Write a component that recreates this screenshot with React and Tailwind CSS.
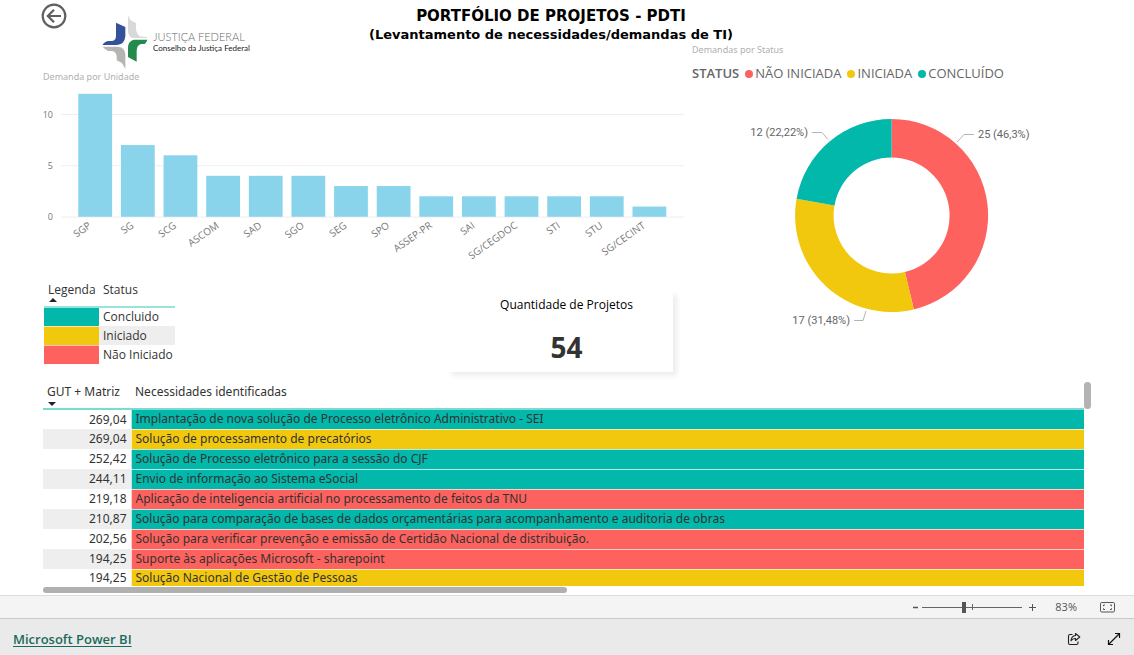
import React from "react";

const TEAL = "#01b8aa";
const YELLOW = "#f2c80f";
const RED = "#fd625e";

const units = [
  ["SGP", 12],
  ["SG", 7],
  ["SCG", 6],
  ["ASCOM", 4],
  ["SAD", 4],
  ["SGO", 4],
  ["SEG", 3],
  ["SPO", 3],
  ["ASSEP-PR", 2],
  ["SAI", 2],
  ["SG/CEGDOC", 2],
  ["STI", 2],
  ["STU", 2],
  ["SG/CECINT", 1],
];

const statusLegend = [
  ["NÃO INICIADA", "bg-[#fd625e]"],
  ["INICIADA", "bg-[#f2c80f]"],
  ["CONCLUÍDO", "bg-[#01b8aa]"],
];

const legendRows = [
  ["Concluido", "bg-[#01b8aa]"],
  ["Iniciado", "bg-[#f2c80f]"],
  ["Não Iniciado", "bg-[#fd625e]"],
];

const needs = [
  ["269,04", "Implantação de nova solução de Processo eletrônico Administrativo - SEI", "bg-[#01b8aa]"],
  ["269,04", "Solução de processamento de precatórios", "bg-[#f2c80f]"],
  ["252,42", "Solução de Processo eletrônico para a sessão do CJF", "bg-[#01b8aa]"],
  ["244,11", "Envio de informação ao Sistema eSocial", "bg-[#01b8aa]"],
  ["219,18", "Aplicação de inteligencia artificial no processamento de feitos da TNU", "bg-[#fd625e]"],
  ["210,87", "Solução para comparação de bases de dados orçamentárias para acompanhamento e auditoria de obras", "bg-[#01b8aa]"],
  ["202,56", "Solução para verificar prevenção e emissão de Certidão Nacional de distribuição.", "bg-[#fd625e]"],
  ["194,25", "Suporte às aplicações Microsoft - sharepoint", "bg-[#fd625e]"],
  ["194,25", "Solução Nacional de Gestão de Pessoas", "bg-[#f2c80f]"],
];

function Logo() {
  return (
    <div className="flex items-center">
      <svg className="h-[54px] w-[46px]" viewBox="16 14 138 162" aria-hidden="true">
        <path d="M94 14 Q98 24 102 30 L118 38 V55 Q120 78 138 79 H148 L152 83 H106 Q94 76 94 62 Z" fill="#d9d9d9" />
        <path d="M58 37 L86 50 V78 Q84 103 60 104 H18 Q20 97 34 92 H46 Q58 90 58 76 Z" fill="#34519b" />
        <path d="M18 109 H64 Q86 112 86 132 V176 L76 158 L60 150 V138 Q58 123 46 122 H34 Q26 118 18 109 Z" fill="#b5b5b3" />
        <path d="M152 88 H112 Q94 92 94 112 V140 L120 154 V122 Q120 104 134 101 H144 Q150 96 152 88 Z" fill="#23894c" />
      </svg>
      <div className="ml-[5px] flex flex-col font-[Lato,sans-serif]">
        <span className="text-[11px] leading-[12px] font-light text-[#666]">JUSTIÇA FEDERAL</span>
        <span className="text-[8px] leading-[10px] font-normal text-[#222]">Conselho da Justiça Federal</span>
      </div>
    </div>
  );
}

function BarChart() {
  return (
    <svg className="block h-auto w-full" viewBox="0 84 692 186" role="img" aria-label="Demanda por Unidade">
      {[0, 5, 10].map((v) => (
        <g key={v}>
          <line x1="61" x2="684" y1={217 - v * 10.25} y2={217 - v * 10.25} stroke="#eeeeee" />
          <text x="53" y={220 - v * 10.25} textAnchor="end" fontSize="9" fill="#777">
            {v}
          </text>
        </g>
      ))}
      {units.map(([name, value], i) => {
        const x = 78.3 + i * 42.63;
        return (
          <g key={name}>
            <rect x={x} y={216.8 - value * 10.25} width="33.8" height={value * 10.25} fill="#8ad4eb" />
            <text
              transform={`translate(${x + 13.5} 227) rotate(-35)`}
              textAnchor="end"
              fontSize="10"
              fill="#777"
            >
              {name}
            </text>
          </g>
        );
      })}
    </svg>
  );
}

const CX = 891.6;
const CY = 215.5;

function slice(from, to) {
  const pt = (r, t) => {
    const a = t * 2 * Math.PI;
    return `${CX + r * Math.sin(a)} ${CY - r * Math.cos(a)}`;
  };
  const large = to - from > 0.5 ? 1 : 0;
  return `M${pt(96.5, from)} A96.5 96.5 0 ${large} 1 ${pt(96.5, to)} L${pt(58, to)} A58 58 0 ${large} 0 ${pt(58, from)} Z`;
}

function Donut() {
  return (
    <svg className="block h-auto w-full" viewBox="692 84 442 250" role="img" aria-label="Demandas por Status">
      <path d={slice(0, 25 / 54)} fill={RED} />
      <path d={slice(25 / 54, 42 / 54)} fill={YELLOW} />
      <path d={slice(42 / 54, 1)} fill={TEAL} />
      <g fill="none" stroke="#b3b3b3">
        <path d="M957 142 L964 134.500 H974" />
        <path d="M812 132.500 H822 L828 139.500" />
        <path d="M854 320.500 H863 L866 311" />
      </g>
      <g fontSize="11" fill="#666" fontFamily="Roboto, sans-serif">
        <text x="978" y="138">25 (46,3%)</text>
        <text x="808" y="136" textAnchor="end">12 (22,22%)</text>
        <text x="850" y="324" textAnchor="end">17 (31,48%)</text>
      </g>
    </svg>
  );
}

function LegendTable() {
  return (
    <table className="w-[131px] table-fixed border-collapse text-[12px] text-[#333]">
      <thead>
        <tr className="h-[24px] border-b-2 border-[#99e3dd] text-left align-top">
          <th className="w-[55px] p-0 pl-1 font-normal">
            <span className="block leading-[14px] whitespace-nowrap">Legenda</span>
            <svg className="block h-[5px] w-[10px]" viewBox="0 0 10 5" aria-hidden="true">
              <path d="M1 5 L5 1 L9 5 Z" fill="#222" />
            </svg>
          </th>
          <th className="p-0 pl-1 leading-[14px] font-normal">Status</th>
        </tr>
      </thead>
      <tbody>
        {legendRows.map(([name, color]) => (
          <tr key={name} className="h-[19px] even:bg-[#eeeeee]">
            <td className={`border-b border-white/60 p-0 ${color}`} />
            <td className="p-0 pl-1 leading-[18px] whitespace-nowrap">{name}</td>
          </tr>
        ))}
      </tbody>
    </table>
  );
}

function NeedsTable() {
  return (
    <section className="mr-[43px] ml-[43px]">
      <div className="flex">
        <table className="min-w-0 flex-1 table-fixed border-collapse font-['Noto_Sans',sans-serif] text-[12px] leading-[16px] text-[#333]">
          <thead>
            <tr className="h-[27px] border-b-2 border-[#7bdbd3] text-left align-top">
              <th className="w-[88px] p-0 pl-1 font-normal">
                <span className="block leading-[20px] whitespace-nowrap">GUT + Matriz</span>
                <svg className="block h-[5px] w-[10px]" viewBox="0 0 10 5" aria-hidden="true">
                  <path d="M1 0 L5 4 L9 0 Z" fill="#222" />
                </svg>
              </th>
              <th className="p-0 pl-1 leading-[20px] font-normal">Necessidades identificadas</th>
            </tr>
          </thead>
          <tbody>
            {needs.map(([score, text, color]) => (
              <tr key={text} className="h-[20px] last:h-[16px] even:bg-[#eeeeee]">
                <td className="p-0 pr-1 text-right">{score}</td>
                <td className={`border-b border-l border-white/70 p-0 pl-1 whitespace-nowrap ${color}`}>{text}</td>
              </tr>
            ))}
          </tbody>
        </table>
        <div className="h-[27px] w-[7px] rounded-full bg-[#b3b3b1]" />
      </div>
      <div className="h-[6px] w-1/2 rounded-full bg-[#b0b0ae]" />
    </section>
  );
}

export default function App() {
  return (
    <div className="flex min-h-screen flex-col bg-white font-['Open_Sans','Noto_Sans',sans-serif]">
      <main className="flex-1 pb-[2px]">
        <div className="grid grid-cols-[692fr_442fr]">
          <h1 className="col-span-2 col-start-1 row-start-1 pt-[6px] pr-8 text-center font-['DejaVu_Sans',sans-serif] font-bold text-black">
            <span className="block text-[15px] leading-[20px]">PORTFÓLIO DE PROJETOS - PDTI</span>
            <span className="block text-[13px] leading-[18px]">(Levantamento de necessidades/demandas de TI)</span>
          </h1>

          <div className="col-start-1 row-start-1">
            <div className="flex h-[70px] items-start pl-[41px]">
              <button type="button" aria-label="Voltar" className="relative mt-[3px]">
                <svg className="h-[26px] w-[26px]" viewBox="0 0 26 26" fill="none" stroke="#5f5f5f" strokeWidth="2.2">
                  <circle cx="13" cy="13" r="11.300" />
                  <path d="M20 13 H7 M13 6.800 L6.800 13 L13 19.200" />
                </svg>
              </button>
              <div className="mt-[15px] ml-[35px]">
                <Logo />
              </div>
            </div>
            <h2 className="pl-[43px] font-['Noto_Sans',sans-serif] text-[9px] leading-[14px] text-[#b0b0b0]">Demanda por Unidade</h2>
            <BarChart />
            <div className="flex items-start justify-between pt-[13px] pr-[19px] pl-[44px]">
              <LegendTable />
              <div className="mt-2 flex h-[81px] w-[225px] flex-col items-center shadow-[4px_4px_5px_#eeeeee]">
                <span className="mt-1 pl-3 text-[12px] leading-[20px] text-black">Quantidade de Projetos</span>
                <strong className="mt-[14px] pl-3 text-[28px] leading-[36px] font-bold text-[#333]">54</strong>
              </div>
            </div>
          </div>

          <div className="col-start-2 row-start-1 pt-[43px]">
            <h2 className="font-['Noto_Sans',sans-serif] text-[9px] leading-[14px] text-[#b0b0b0]">Demandas por Status</h2>
            <div className="flex h-[27px] items-center gap-[6px] pt-[6px] text-[13px] text-[#666]">
              <span className="font-semibold">STATUS</span>
              {statusLegend.map(([name, color]) => (
                <span key={name} className="flex items-center gap-[2px] whitespace-nowrap">
                  <i className={`size-2 rounded-full ${color}`} />
                  {name}
                </span>
              ))}
            </div>
            <Donut />
          </div>
        </div>
        <div className="pt-[10px]">
          <NeedsTable />
        </div>
      </main>

      <div className="flex h-[23px] items-center justify-end border-t border-[#dcdcdc] bg-[#f4f4f4] pr-[19px] text-[#555]">
        <button type="button" aria-label="Reduzir" className="flex h-4 w-[14px] items-center justify-center">
          <svg className="size-[9px]" viewBox="0 0 9 9" aria-hidden="true">
            <path d="M2 4.500 H7" stroke="#555" strokeWidth="1.500" />
          </svg>
        </button>
        <div className="relative flex h-4 w-[100px] items-center">
          <span className="absolute top-[5px] left-[50px] h-[6px] w-px bg-[#666]" />
          <input
            type="range"
            min="0"
            max="100"
            defaultValue="41"
            aria-label="Zoom"
            className="relative h-3 w-full appearance-none bg-transparent [&::-webkit-slider-runnable-track]:h-px [&::-webkit-slider-runnable-track]:bg-[#666] [&::-webkit-slider-thumb]:-mt-[5px] [&::-webkit-slider-thumb]:h-[11px] [&::-webkit-slider-thumb]:w-1 [&::-webkit-slider-thumb]:appearance-none [&::-webkit-slider-thumb]:bg-[#555]"
          />
        </div>
        <button type="button" aria-label="Ampliar" className="ml-[5px] flex size-[10px] items-center justify-center">
          <svg className="size-[9px]" viewBox="0 0 9 9" aria-hidden="true">
            <path d="M1 4.500 H8 M4.500 1 V8" stroke="#555" />
          </svg>
        </button>
        <span className="ml-[18px] text-[11px] leading-[16px]">83%</span>
        <button type="button" aria-label="Ajustar à página" className="ml-[23px]">
          <svg className="block h-[11px] w-[15px]" viewBox="0 0 15 11" fill="none" stroke="#555" aria-hidden="true">
            <rect x=".5" y=".5" width="14" height="9.500" rx="1.200" />
            <path d="M3.500 4.200 V3 H5 M10 3 H11.500 V4.200 M11.500 6.300 V7.500 H10 M5 7.500 H3.500 V6.300" />
          </svg>
        </button>
      </div>

      <footer className="flex h-[37px] items-center border-t border-[#c8c8c8] bg-[#eaeaea] pt-[3px] pr-[13px] pl-[13px]">
        <a href="#powerbi" className="text-[13px] leading-[18px] font-semibold text-[#1a6b5d] underline underline-offset-2">
          Microsoft Power BI
        </a>
        <button type="button" aria-label="Compartilhar" className="ml-auto">
          <svg className="block size-[14px]" viewBox="0 0 14 14" fill="none" stroke="#222" strokeWidth="1.100" aria-hidden="true">
            <path d="M5.500 2.500 H3 Q1.500 2.500 1.500 4 V11 Q1.500 12.500 3 12.500 H9.500 Q11 12.500 11 11 V9.500" />
            <path d="M8.500 1.500 L12.800 5 L8.500 8.500 V6.500 Q5.500 6.300 4 8.800 Q4.300 4 8.500 3.500 Z" strokeLinejoin="round" />
          </svg>
        </button>
        <button type="button" aria-label="Tela cheia" className="ml-[26px]">
          <svg className="block size-[14px]" viewBox="0 0 14 14" fill="none" stroke="#111" strokeWidth="1.200" aria-hidden="true">
            <path d="M1.500 12.500 L12.500 1.500 M8 1.500 H12.500 V6 M1.500 8 V12.500 H6" />
          </svg>
        </button>
      </footer>
    </div>
  );
}
